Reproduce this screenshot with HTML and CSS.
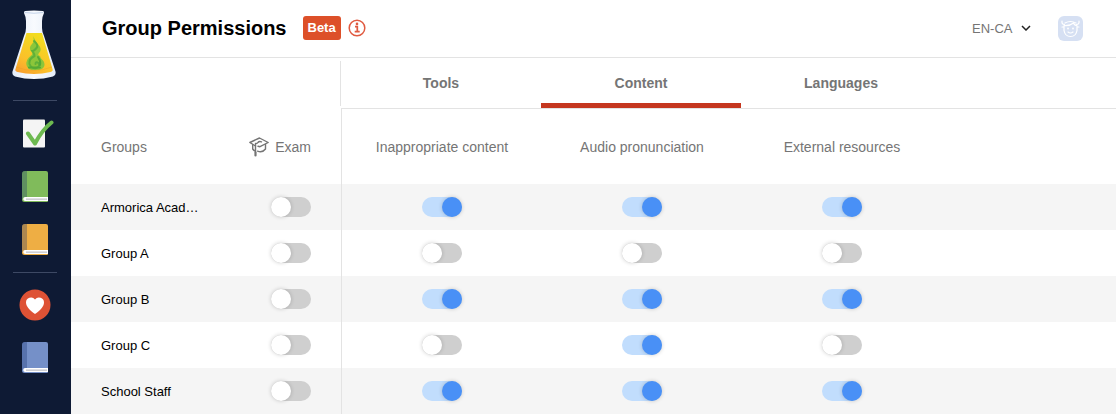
FILE: index.html
```html
<!DOCTYPE html>
<html lang="en-CA">
<head>
<meta charset="utf-8">
<title>Group Permissions</title>
<link rel="stylesheet" href="styles.css">
</head>
<body>
<svg width="0" height="0" class="defs" aria-hidden="true">
  <defs>
    <linearGradient id="liquid" x1="0" y1="1" x2="0.5" y2="0">
      <stop offset="0" stop-color="#f8982f"/><stop offset="0.4" stop-color="#fbc02a"/><stop offset="1" stop-color="#f2dc20"/>
    </linearGradient>
    <linearGradient id="glass" x1="0" y1="0" x2="1" y2="0">
      <stop offset="0" stop-color="#e3ecf8"/><stop offset="0.5" stop-color="#f8fafe"/><stop offset="1" stop-color="#e3ecf8"/>
    </linearGradient>
  </defs>
  <symbol id="book" viewBox="0 0 32 32">
    <path d="M5 0H26a2 2 0 0 1 2 2v28a1 1 0 0 1-1 1H4.500A2.500 2.500 0 0 1 2 28.500V3a3 3 0 0 1 3-3z" fill="currentColor"/>
    <path d="M5 0h2v26H5q-2 0-2.500 2L2 28V3a3 3 0 0 1 3-3z" fill="#14306c" fill-opacity=".3"/>
    <path d="M5.200 26H28v4H5.200a2 2 0 0 1 0-4z" fill="#fff"/>
    <path d="M6 27.500h21v1.300H6z" fill="#c2c3c9"/>
  </symbol>
</svg>
<div class="app">
  <nav class="sidebar" aria-label="Main">
    <a class="logo" href="#" aria-label="Home">
      <svg width="44" height="70" viewBox="1 0 44 70">
        <path d="M14 1Q23 0 32 1q1 0 1 2-2 4-2 8v7q0 4 2 8l11 34q2 5-2 6.500-19 5-38 0-4-1.500-2-6.500l11-34q2-4 2-8v-7q0-4-2-8 0-2 1-2z" fill="url(#glass)"/>
        <path d="M14 2.500q9 1.500 18 0" stroke="#c3d3ea" fill="none"/>
        <path d="M15.500 23h15.500l10.500 36q1 2-2 3-16.500 4-33 0-3-1-2-3z" fill="url(#liquid)"/>
        <path d="M22 26q2 5-1 8-4 4-.5 8 2 2-1 4-5 4-4 9 1 4 5 5h7.500q5-1 5.500-5 0-4-3-6-1-1-1.500-3-3-1-1-3 3-3 .5-7-4-4-6.500-10z" fill="#8cc63a"/>
        <path d="M23 31q5 4 2.500 7t-4 3q2 3 2 5-6 3-5 8 2 5 7 4 4-2 2-5-3-2-3 1" fill="none" stroke="#5fb038" stroke-width="2" stroke-linecap="round"/>
        <path d="M27 47q3 4 2 8M18 57.500h11" fill="none" stroke="#55a935" stroke-width="2" stroke-linecap="round"/>
        <path d="M5 57q18 7 36 0" fill="none" stroke="#e79b25" stroke-opacity=".4"/>
      </svg>
    </a>
    <hr class="divider">
    <div class="links">
      <a href="#" aria-label="Corrector"><svg width="38" height="32" viewBox="0 0 38 32">
        <rect x="7" y="1.500" width="22" height="28" rx="1" fill="#f4f4f4"/>
        <path d="M12 15.500l7 10Q26 12 35.500 4.500" fill="none" stroke="#6db950" stroke-width="4" stroke-linecap="round" stroke-linejoin="round"/>
      </svg></a>
      <a class="green" href="#" aria-label="Dictionaries"><svg width="30" height="32"><use href="#book" width="32" height="32"/></svg></a>
      <a class="orange" href="#" aria-label="Guides"><svg width="30" height="32"><use href="#book" width="32" height="32"/></svg></a>
    </div>
    <hr class="divider">
    <div class="links">
      <a href="#" aria-label="Favourites"><svg width="32" height="32" viewBox="0 0 32 32">
        <circle cx="16" cy="16" r="15.500" fill="#de5235"/>
        <path d="M16 25C10 21 7 17 7 13.500a5 5 0 0 1 9-3 5 5 0 0 1 9 3C25 17 22 21 16 25z" fill="#fff"/>
      </svg></a>
      <a class="blue" href="#" aria-label="User guide"><svg width="30" height="32"><use href="#book" width="32" height="32"/></svg></a>
    </div>
  </nav>
  <main class="main">
    <header class="header">
      <h1 class="title">Group Permissions</h1>
      <span class="badge">Beta</span>
      <button class="info" type="button" aria-label="About the beta"><svg width="18" height="18" viewBox="0 0 18 18" fill="none" stroke="#e05a40">
        <circle cx="9" cy="9" r="7.800" stroke-width="1.500"/>
        <path d="M7 7.700h2.300v5M6.700 12.700h5" stroke-width="1.700"/><circle cx="9" cy="4.900" r="1.300" fill="#e05a40" stroke="none"/>
      </svg></button>
      <label class="language">
        <select aria-label="Language"><option>EN-CA</option><option>FR-CA</option></select>
        <svg width="10" height="6" viewBox="0 0 10 6"><path d="M1 1l4 4 4-4" fill="none" stroke="#222" stroke-width="1.500"/></svg>
      </label>
      <button class="avatar" type="button" aria-label="Account"><svg width="25" height="25" viewBox="0 0 25 25">
        <rect width="25" height="25" rx="6" fill="#d6e0f3"/>
        <g fill="none" stroke="#fff" stroke-width="1.200" stroke-linecap="round" stroke-linejoin="round">
          <path d="M6 10v4.500q1 6 6.500 6t6.500-6V10M6 9.500q6 .5 9.500-2.500 1 2.500 3.500 2.500M6.500 8.500Q3.500 8.500 4 5M18.500 8.500q3 0 2.500-3.500M7 7q5.500-3 11 0M4 11h1.500M19.500 11H21"/>
          <path d="M10 16q2.500 2 5 0"/>
        </g>
        <circle cx="10" cy="12.500" r=".9" fill="#fff"/><circle cx="15" cy="12.500" r=".9" fill="#fff"/>
      </svg></button>
    </header>
    <div class="tabbar">
      <div class="tabspacer"></div>
      <div class="tabs" role="tablist">
        <button class="tab" role="tab" type="button" aria-selected="false">Tools</button>
        <button class="tab" role="tab" type="button" aria-selected="true">Content</button>
        <button class="tab" role="tab" type="button" aria-selected="false">Languages</button>
      </div>
    </div>
    <table class="permissions">
      <colgroup><col class="c-group"><col class="c-exam"><col class="c-first"><col class="c-perm"><col class="c-perm"><col></colgroup>
      <thead>
        <tr>
          <th class="group" scope="col">Groups</th>
          <th class="exam" scope="col"><span class="examlabel"><svg width="20" height="20" viewBox="0 0 20 20" fill="none" stroke="#757575" stroke-width="1.400" stroke-linejoin="round" stroke-linecap="round">
            <path d="M6.500 9L.8 5.500 10.500 1l8.700 4.500L11 9.700 9 9.200"/><path d="M12.500 4.800q-2.500-.8-3.500.7-.8 1.300-2.500 1V15"/><path d="M3.700 7.500v4.500q1 1.500 2.500 2M16.500 7.500V12q-3 4-8 2.200"/><path d="M6.500 15.500v3" stroke-width="2.200"/>
          </svg>Exam</span></th>
          <th class="first" scope="col">Inappropriate content</th>
          <th scope="col">Audio pronunciation</th>
          <th scope="col">External resources</th>
          <th aria-hidden="true"></th>
        </tr>
      </thead>
      <tbody>
        <tr><td class="group">Armorica Academy</td>
          <td class="exam"><input class="toggle" type="checkbox" aria-label="Armorica Academy: Exam"></td>
          <td class="first"><input class="toggle" type="checkbox" checked aria-label="Armorica Academy: Inappropriate content"></td>
          <td><input class="toggle" type="checkbox" checked aria-label="Armorica Academy: Audio pronunciation"></td>
          <td><input class="toggle" type="checkbox" checked aria-label="Armorica Academy: External resources"></td><td></td></tr>
        <tr><td class="group">Group A</td>
          <td class="exam"><input class="toggle" type="checkbox" aria-label="Group A: Exam"></td>
          <td class="first"><input class="toggle" type="checkbox" aria-label="Group A: Inappropriate content"></td>
          <td><input class="toggle" type="checkbox" aria-label="Group A: Audio pronunciation"></td>
          <td><input class="toggle" type="checkbox" aria-label="Group A: External resources"></td><td></td></tr>
        <tr><td class="group">Group B</td>
          <td class="exam"><input class="toggle" type="checkbox" aria-label="Group B: Exam"></td>
          <td class="first"><input class="toggle" type="checkbox" checked aria-label="Group B: Inappropriate content"></td>
          <td><input class="toggle" type="checkbox" checked aria-label="Group B: Audio pronunciation"></td>
          <td><input class="toggle" type="checkbox" checked aria-label="Group B: External resources"></td><td></td></tr>
        <tr><td class="group">Group C</td>
          <td class="exam"><input class="toggle" type="checkbox" aria-label="Group C: Exam"></td>
          <td class="first"><input class="toggle" type="checkbox" aria-label="Group C: Inappropriate content"></td>
          <td><input class="toggle" type="checkbox" checked aria-label="Group C: Audio pronunciation"></td>
          <td><input class="toggle" type="checkbox" aria-label="Group C: External resources"></td><td></td></tr>
        <tr><td class="group">School Staff</td>
          <td class="exam"><input class="toggle" type="checkbox" aria-label="School Staff: Exam"></td>
          <td class="first"><input class="toggle" type="checkbox" checked aria-label="School Staff: Inappropriate content"></td>
          <td><input class="toggle" type="checkbox" checked aria-label="School Staff: Audio pronunciation"></td>
          <td><input class="toggle" type="checkbox" checked aria-label="School Staff: External resources"></td><td></td></tr>
      </tbody>
    </table>
  </main>
</div>
</body>
</html>
```
FILE: styles.css
```css
* { box-sizing: border-box; }
body {
  margin: 0;
  background: #fff;
  color: #000;
  font-family: "Liberation Sans", Arial, Helvetica, sans-serif;
  font-size: 14px;
}
button { border: 0; padding: 0; background: none; font: inherit; cursor: pointer; }
svg { display: block; }
.defs { position: absolute; }

.app { display: flex; min-height: 100vh; }
.sidebar {
  flex: 0 0 71px;
  display: flex;
  flex-direction: column;
  align-items: center;
  padding: 10px 1px 0 0;
  background: #0e1a34;
}
.logo { margin-right: 2px; margin-bottom: 20px; }
.divider { width: 44px; height: 1px; margin: 0; border: 0; background: #3d4964; }
.links { display: flex; flex-direction: column; align-items: center; gap: 21px; padding: 16px 0; }
.links:first-of-type { padding-top: 17px; }
.green { color: #80bb5b; }
.orange { color: #eeae44; }
.blue { color: #7590c8; }

.main { flex: 1; min-width: 0; }
.header {
  display: flex;
  align-items: center;
  height: 58px;
  padding: 0 33px 1px 31px;
  border-bottom: 1px solid #e3e3e3;
}
.title { margin: 0; font-size: 20px; line-height: 24px; }
.badge {
  margin-left: 16px;
  padding: 0 5px;
  border-radius: 3px;
  background: #dd5029;
  color: #fff;
  font-size: 13px;
  font-weight: bold;
  line-height: 24px;
}
.info { margin-left: 7px; }
.language { display: flex; align-items: center; gap: 8px; margin-left: auto; }
.language select {
  appearance: none;
  border: 0;
  padding: 0;
  background: none;
  color: #757575;
  font: inherit;
  font-size: 13px;
}
.avatar { margin-left: 27px; }

.tabbar { display: flex; height: 51px; }
.tabspacer { flex: 0 0 270px; margin: 3px 0; border-right: 1px solid #e3e3e3; }
.tabs { flex: 1; display: flex; border-bottom: 1px solid #e3e3e3; }
.tab {
  width: 200px;
  border-top: 5px solid transparent;
  border-bottom: 5px solid transparent;
  color: #757575;
  font-weight: bold;
}
.tab[aria-selected="true"] { border-bottom-color: #c5371f; }

.permissions { width: 100%; table-layout: fixed; border-collapse: separate; border-spacing: 0; }
.c-group { width: 131px; }
.c-exam { width: 139px; }
.c-first { width: 201px; }
.c-perm { width: 200px; }
.permissions th { height: 75px; padding: 0; color: #757575; font-weight: normal; }
.permissions td { height: 46px; padding: 0; text-align: center; }
.permissions tbody tr:nth-child(odd) { background: #f5f5f5; }
.permissions .first { border-left: 1px solid #e3e3e3; }
.permissions .group { padding-left: 30px; text-align: left; overflow: hidden; text-overflow: ellipsis; white-space: nowrap; }
.permissions td.group { font-size: 13px; }
.permissions .exam { padding-right: 30px; text-align: right; }
.examlabel { display: flex; align-items: center; justify-content: flex-end; gap: 6px; }

.toggle {
  appearance: none;
  display: inline-block;
  width: 40px;
  height: 20px;
  margin: 0;
  border-radius: 10px;
  background: #cfcfcf;
  vertical-align: middle;
  cursor: pointer;
}
.toggle::before {
  content: "";
  display: block;
  width: 20px;
  height: 20px;
  border-radius: 50%;
  background: #fff;
  box-shadow: 0 0 4px rgba(0, 0, 0, 0.2);
}
.toggle:checked { background: #c1ddfd; }
.toggle:checked::before { margin-left: 20px; background: #4990f6; }
```
